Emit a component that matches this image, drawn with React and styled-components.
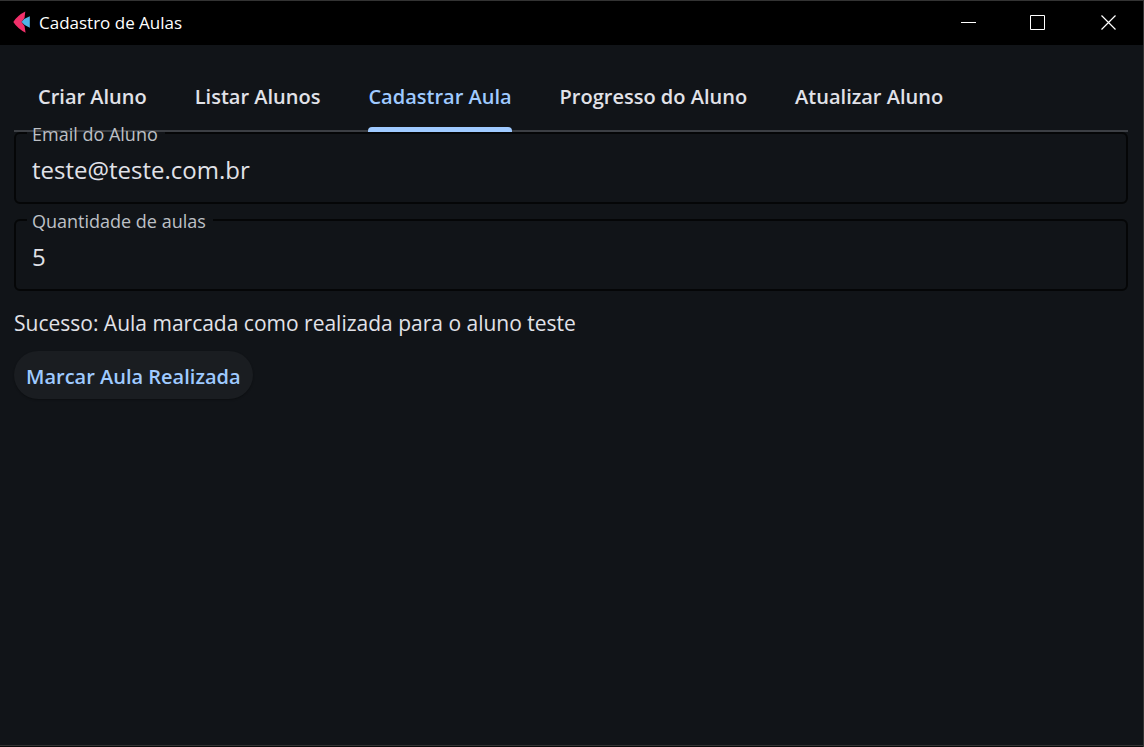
import React, { useState } from "react";
import styled, { createGlobalStyle } from "styled-components";

const GlobalStyle = createGlobalStyle`
  * { box-sizing: border-box; }
  body {
    margin: 0;
    background: #111418;
    color: #e1e2e8;
    font-family: "Open Sans", "Noto Sans", sans-serif;
  }
`;

const Window = styled.div`
  display: flex;
  flex-direction: column;
  min-height: 100vh;
  border: 1px solid #333333;
  border-left: 0;
  border-bottom: 0;
`;

const TitleBar = styled.header`
  display: flex;
  align-items: center;
  height: 44px;
  padding-left: 13px;
  background: #000000;
`;

const Logo = styled.svg`
  width: 18px;
  height: 24px;
  margin-right: 8px;
`;

const Title = styled.h1`
  flex: 1;
  margin: 0;
  color: #ffffff;
  font-size: 17px;
  font-weight: 400;
  line-height: 24px;
`;

const WindowButton = styled.button`
  display: flex;
  align-items: center;
  justify-content: center;
  width: 70px;
  height: 44px;
  padding: 0;
  border: 0;
  background: transparent;
  color: #ffffff;
`;

const Glyph = styled.svg`
  width: 16px;
  height: 16px;
  fill: none;
  stroke: currentColor;
`;

const Page = styled.main`
  flex: 1;
  padding: 16px 15px 16px 14px;
`;

const WindowEdge = styled.div`
  height: 2px;
  border-top: 1px solid #333333;
  background: #0a0a0a;
`;

const TabBar = styled.nav`
  display: flex;
  height: 71px;
  border-bottom: 2px solid #3c3f44;
`;

const Tab = styled.button`
  display: flex;
  height: 71px;
  padding: 0 24px;
  border: 0;
  background: transparent;
  color: ${({ $active }) => ($active ? "#9fcaff" : "#e1e2e8")};
  font: inherit;
  font-size: 20px;
  font-weight: 600;
  line-height: 72px;
  white-space: nowrap;
`;

const TabLabel = styled.span`
  display: flex;
  flex-direction: column;
  height: 71px;

  &::after {
    content: "";
    flex: none;
    height: 5px;
    margin-top: -6px;
    border-radius: 4px 4px 0 0;
    background: ${({ $active }) => ($active ? "#9fcaff" : "transparent")};
  }
`;

const Form = styled.form`
  display: flex;
  flex-direction: column;
  align-items: flex-start;
`;

const Field = styled.fieldset`
  width: 100%;
  min-width: 0;
  height: 83px;
  margin: ${({ $first }) => ($first ? "-11px" : "4px")} 0 0;
  padding: 0;
  border: 2px solid #050607;
  border-radius: 6px;
`;

const Legend = styled.legend`
  height: 24px;
  margin-left: 11px;
  padding: 1px 7px 0 5px;
  color: #bdc0c6;
  font-size: 18px;
  line-height: 24px;
`;

const Input = styled.input`
  display: block;
  width: 100%;
  height: 32px;
  margin-top: 9px;
  padding: 0 16px;
  border: 0;
  outline: 0;
  background: transparent;
  color: #e1e2e8;
  font: inherit;
  font-size: 24px;
  line-height: 32px;
`;

const Status = styled.p`
  margin: 16px 0 12px;
  font-size: 21px;
  line-height: 32px;
`;

const Submit = styled.button`
  height: 48px;
  padding: 4px 12px 0;
  border: 0;
  border-radius: 24px;
  background: #1a1d21;
  box-shadow: 0 1px 2px rgba(0, 0, 0, 0.3);
  color: #9fcaff;
  font: inherit;
  font-size: 20px;
  font-weight: 600;
  line-height: 44px;
`;

const tabs = [
  "Criar Aluno",
  "Listar Alunos",
  "Cadastrar Aula",
  "Progresso do Aluno",
  "Atualizar Aluno",
];

function OutlinedField({ id, label, value, onChange, first, type }) {
  return (
    <Field $first={first}>
      <Legend>
        <label htmlFor={id}>{label}</label>
      </Legend>
      <Input
        id={id}
        type={type}
        value={value}
        onChange={(event) => onChange(event.target.value)}
      />
    </Field>
  );
}

export default function App() {
  const [active, setActive] = useState("Cadastrar Aula");
  const [email, setEmail] = useState("teste@teste.com.br");
  const [amount, setAmount] = useState("5");

  return (
    <Window>
      <GlobalStyle />
      <TitleBar>
        <Logo viewBox="0 0 18 24" aria-hidden="true">
          <path
            d="M12.300 0.600Q4.500 4.500 0.300 11Q4.500 17.500 12.600 21.800L11.500 15L8.500 11L11.500 7Z"
            fill="#f0306a"
          />
          <path d="M16.800 5.300V16.700Q11.500 15 8.500 11Q11.500 7 16.800 5.300Z" fill="#50b4e6" />
        </Logo>
        <Title>Cadastro de Aulas</Title>
        <WindowButton type="button" aria-label="Minimizar">
          <Glyph viewBox="0 0 16 16">
            <path d="M1 7.500H16" />
          </Glyph>
        </WindowButton>
        <WindowButton type="button" aria-label="Maximizar">
          <Glyph viewBox="0 0 16 16">
            <path d="M0.500 0.500H14.500V14.500H0.500Z" />
          </Glyph>
        </WindowButton>
        <WindowButton type="button" aria-label="Fechar">
          <Glyph viewBox="0 0 16 16">
            <path d="M1.500 0.500L15.500 14.500M15.500 0.500L1.500 14.500" strokeWidth="1.200" />
          </Glyph>
        </WindowButton>
      </TitleBar>
      <Page>
        <TabBar aria-label="Seções">
          {tabs.map((tab) => (
            <Tab
              key={tab}
              type="button"
              $active={tab === active}
              onClick={() => setActive(tab)}
            >
              <TabLabel $active={tab === active}>{tab}</TabLabel>
            </Tab>
          ))}
        </TabBar>
        <Form onSubmit={(event) => event.preventDefault()}>
          <OutlinedField
            id="email"
            type="text"
            label="Email do Aluno"
            value={email}
            onChange={setEmail}
            first
          />
          <OutlinedField
            id="quantidade"
            type="text"
            label="Quantidade de aulas"
            value={amount}
            onChange={setAmount}
          />
          <Status role="status">
            Sucesso: Aula marcada como realizada para o aluno teste
          </Status>
          <Submit type="submit">Marcar Aula Realizada</Submit>
        </Form>
      </Page>
      <WindowEdge />
    </Window>
  );
}
